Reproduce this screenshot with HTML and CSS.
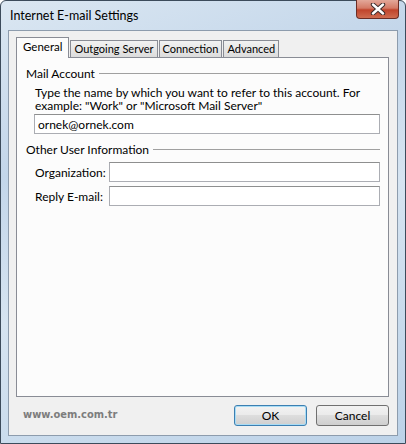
FILE: index.html
```html
<!DOCTYPE html>
<html lang="en">
  <head>
    <meta charset="UTF-8" />
    <title>Internet E-mail Settings</title>
    <link rel="stylesheet" href="styles.css">
  </head>
  <body>
    <div class="window">
      <div class="titlebar">
        <span class="title">Internet E-mail Settings</span>
        <button class="close-btn" type="button" aria-label="Close">
          <svg width="16" height="12" viewBox="0 0 16 12">
            <path d="M3 1.5 L13 10.5 M13 1.5 L3 10.5"
              stroke="#3a2a2a" stroke-width="4.4" stroke-linecap="round" fill="none" />
            <path d="M3 1.5 L13 10.5 M13 1.5 L3 10.5"
              stroke="#ffffff" stroke-width="2.4" stroke-linecap="round" fill="none" />
          </svg>
        </button>
      </div>

      <div class="client">
        <div class="tabs">
          <div class="tab active">General</div>
          <div class="tab">Outgoing Server</div>
          <div class="tab">Connection</div>
          <div class="tab">Advanced</div>
        </div>

        <div class="panel">
          <div class="group-title">Mail Account</div>
          <div class="group-body">
            <p class="hint">Type the name by which you want to refer to this account. For example: "Work" or "Microsoft Mail Server"</p>
            <input class="field" type="text" value="ornek@ornek.com" />
          </div>

          <div class="group-title">Other User Information</div>
          <div class="group-body">
            <div class="row">
              <label for="org">Organization:</label>
              <input class="field" id="org" type="text" />
            </div>
            <div class="row">
              <label for="reply">Reply E-mail:</label>
              <input class="field" id="reply" type="text" />
            </div>
          </div>
        </div>

        <div class="footer">
          <span class="brand">www.oem.com.tr</span>
          <div class="buttons">
            <button type="button" class="btn default">OK</button>
            <button type="button" class="btn">Cancel</button>
          </div>
        </div>
      </div>
    </div>
  </body>
</html>
```

FILE: styles.css
```css
* {
  box-sizing: border-box;
  margin: 0;
  padding: 0;
}

body {
  font-family: "Segoe UI", Lato, "Noto Sans", sans-serif;
  font-size: 12px;
  color: #000;
  background: #ffffff;
}

.window {
  width: 406px;
  height: 444px;
  border: 1px solid #3c4b5b;
  border-radius: 6px 6px 0 0;
  background: linear-gradient(160deg, #dbe7f2 0%, #c3d6ea 30%, #d6e4f1 55%, #bcd2e8 100%);
  display: flex;
  flex-direction: column;
}

.titlebar {
  height: 29px;
  display: flex;
  justify-content: space-between;
  align-items: flex-start;
  padding-left: 9px;
}

.title {
  margin-top: 7px;
  font-size: 12.5px;
  color: #000;
}

.close-btn {
  width: 43px;
  height: 19px;
  margin-right: 6px;
  margin-top: -1px;
  border: 1px solid #6b2d25;
  border-top: none;
  border-radius: 0 0 4px 4px;
  background: linear-gradient(#e3a89a 0%, #d47a66 45%, #c0442c 55%, #cf6c50 100%);
  display: flex;
  align-items: center;
  justify-content: center;
}

.client {
  flex: 1;
  margin: 0 7px 7px 7px;
  border: 1px solid #8d9cad;
  background: #f0f0f0;
  padding: 6px 8px 0 7px;
  display: flex;
  flex-direction: column;
}

.tabs {
  display: flex;
  align-items: flex-end;
  height: 20px;
  position: relative;
  z-index: 1;
}

.tab {
  height: 17px;
  padding: 0 3px;
  margin-right: 1px;
  border: 1px solid #898c95;
  border-bottom: none;
  background: linear-gradient(#f2f2f2, #dcdcdc);
  font-size: 11px;
  line-height: 16px;
  white-space: nowrap;
}

.tab.active {
  height: 21px;
  margin-bottom: -1px;
  padding: 0 6px;
  background: #fcfcfc;
  font-size: 11.5px;
  line-height: 18px;
}

.panel {
  height: 340px;
  border: 1px solid #898c95;
  background: #fcfcfc;
  padding: 8px 8px 0 9px;
}

.group-title {
  display: flex;
  align-items: center;
  gap: 4px;
  height: 15px;
}

.group-title::after {
  content: "";
  flex: 1;
  height: 1px;
  background: #a0a0a0;
}

.group-body {
  padding: 5px 0 8px 8px;
}

.hint {
  line-height: 13px;
  padding-left: 1px;
  margin-bottom: 2px;
  width: 340px;
}

.field {
  display: block;
  width: 100%;
  height: 20px;
  border: 1px solid #abadb3;
  border-top-color: #8e8f8f;
  background: #ffffff;
  padding: 0 3px;
  font: inherit;
  color: #000;
}

.row {
  display: flex;
  align-items: center;
  margin-bottom: 4px;
}

.row label {
  width: 75px;
  flex: none;
  padding-left: 1px;
}

.footer {
  flex: 1;
  display: flex;
  justify-content: space-between;
  align-items: flex-start;
  padding: 8px 0 0 7px;
}

.brand {
  margin-top: 3px;
  font-family: "DejaVu Sans Condensed", Verdana, sans-serif;
  font-weight: bold;
  font-size: 11px;
  color: #7d7d7d;
}

.buttons {
  display: flex;
  gap: 9px;
}

.btn {
  width: 73px;
  height: 21px;
  border: 1px solid #707070;
  border-radius: 3px;
  background: linear-gradient(#f2f2f2 0%, #ebebeb 45%, #dddddd 50%, #cfcfcf 100%);
  font: inherit;
  color: #000;
}

.btn.default {
  border-color: #3c7fb1;
  box-shadow: inset 0 0 0 1px #a8dcf5;
}
```
